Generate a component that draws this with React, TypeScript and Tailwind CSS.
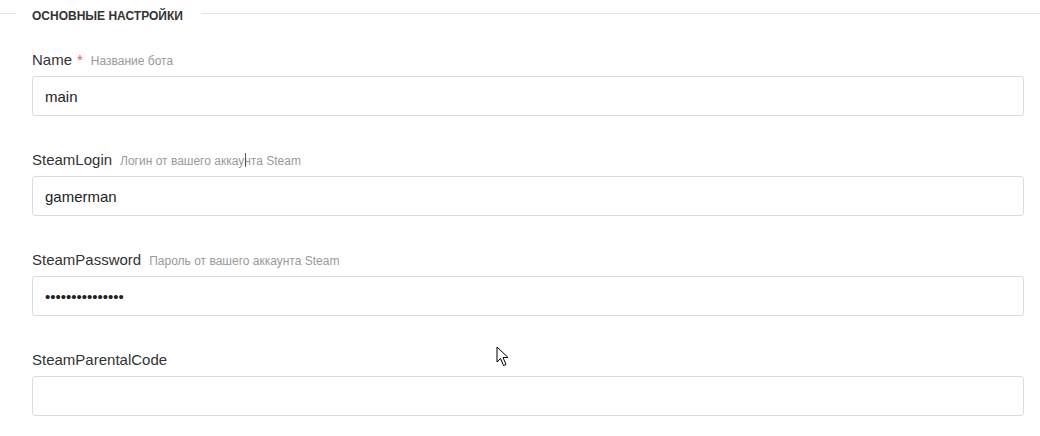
import React from 'react';

type Field = {
    label: string;
    hint?: string;
    required?: boolean;
    value: string;
    type?: string;
};

const fields: Field[] = [
    { label: 'Name', hint: 'Название бота', required: true, value: 'main' },
    { label: 'SteamLogin', hint: 'Логин от вашего аккаунта Steam', value: 'gamerman' },
    { label: 'SteamPassword', hint: 'Пароль от вашего аккаунта Steam', value: 'xxxxxxxxxxxxxxx', type: 'password' },
    { label: 'SteamParentalCode', value: '' },
];

function Arrow() {
    return (
        <svg width="14" height="22" viewBox="0 0 14 22" className="absolute left-[496px] top-[346px]">
            <path
                d="M1 1 L1 16 L4.5 12.5 L7.5 19.5 L10 18.5 L7 11.5 L12 11.5 Z"
                fill="#fff"
                stroke="#000"
                strokeWidth="1"
                strokeLinejoin="round"
            />
        </svg>
    );
}

export default function App() {
    return (
        <div className="relative h-[436px] w-[1040px] overflow-hidden bg-white font-['Liberation_Sans',Arial,sans-serif]">
            {/* Section title */}
            <div className="flex items-start pt-2">
                <div className="mt-[5px] h-px w-4 bg-[#e5e5e5]" />
                <span className="ml-4 text-xs font-bold uppercase leading-4 text-[#333]">
                    Основные настройки
                </span>
                <div className="ml-[18px] mt-[5px] h-px flex-1 bg-[#e5e5e5]" />
            </div>

            {/* Fields */}
            <div className="flex flex-col gap-[34px] pl-8 pr-4 pt-[26px]">
                {fields.map((f) => (
                    <div key={f.label}>
                        <label className="flex items-baseline text-[15px] leading-5 text-[#333]">
                            {f.label}
                            {f.required && <span className="ml-[5px] text-[#e4577c]">*</span>}
                            {f.hint && <span className="ml-2 text-xs text-[#999]">{f.hint}</span>}
                        </label>
                        <input
                            type={f.type ?? 'text'}
                            defaultValue={f.value}
                            className="mt-[6px] block h-10 w-full rounded-[3px] border border-[#dcdcdc] bg-white px-3 text-[15px] text-[#222] outline-none"
                        />
                    </div>
                ))}
            </div>

            {/* text caret from the screenshot */}
            <div className="absolute left-[245px] top-[153px] h-[14px] w-px bg-[#555]" />
            <Arrow />
        </div>
    );
}
